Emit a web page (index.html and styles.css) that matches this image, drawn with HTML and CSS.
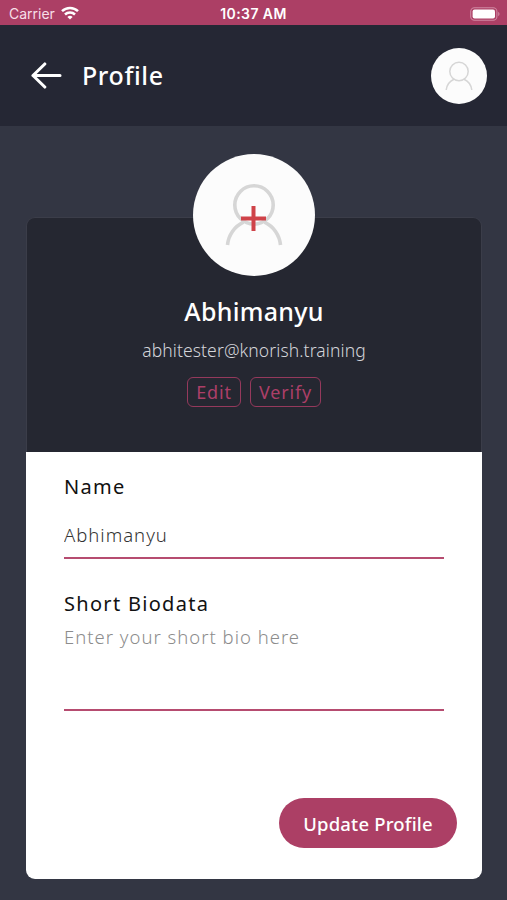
FILE: index.html
```html
<!DOCTYPE html>
<html lang="en">
<head>
    <meta charset="UTF-8">
    <meta name="viewport" content="width=device-width, initial-scale=1.0">
    <title>Profile</title>
    <link rel="stylesheet" href="styles.css">
</head>
<body>
    <div class="status-bar">
        <div class="carrier">
            <span>Carrier</span>
            <svg width="18" height="14" viewBox="0 0 18 14" fill="none" stroke="#fff" stroke-width="2.5">
                <path d="M1 5.2a11.5 11.5 0 0 1 16 0"/>
                <path d="M4 8.5a7.2 7.2 0 0 1 10 0"/>
                <path d="M9 13.6L6.4 11a3.7 3.7 0 0 1 5.2 0z" fill="#fff" stroke="none"/>
            </svg>
        </div>
        <div class="clock">10:37 AM</div>
        <svg class="battery" width="31" height="14" viewBox="0 0 31 14">
            <rect x="0.7" y="0.7" width="26.2" height="12.6" rx="3.8" fill="none" stroke="#d088a2" stroke-width="1.1"/>
            <rect x="2.6" y="2.600" width="22.4" height="8.8" rx="2" fill="#fff"/>
            <path d="M28.2 4.8v4.4c1.8-.7 1.8-3.7 0-4.400z" fill="#d088a2"/>
        </svg>
    </div>

    <header class="header">
        <svg class="back" width="32" height="28" viewBox="0 0 32 28" fill="none" stroke="#fff" stroke-width="3.1" stroke-linecap="round" stroke-linejoin="round">
            <path d="M30 13.500H3M14.800 2L3 13.500l11.800 11.500"/>
        </svg>
        <h1>Profile</h1>
        <div class="avatar-small">
            <svg width="28" height="30" viewBox="0 0 28 30" fill="none" stroke="#d6d6d6" stroke-width="1.5">
                <circle cx="14" cy="10.500" r="9.2"/>
                <path d="M1.200 29A13.500 13.500 0 0 1 9 18.300M26.800 29A13.500 13.500 0 0 0 19 18.300"/>
            </svg>
        </div>
    </header>

    <main class="card">
        <div class="card-top">
            <div class="avatar">
                <svg width="60" height="64" viewBox="0 0 60 64" fill="none" stroke="#d6d6d6" stroke-width="3.6">
                    <circle cx="30" cy="22" r="19.200"/>
                    <path d="M3.500 62A28 28 0 0 1 19.500 39.200M56.500 62A28 28 0 0 0 40.500 39.200"/>
                    <path d="M29.500 23v25M17 35.500h25" stroke="#cf4349" stroke-width="4"/>
                </svg>
            </div>
            <h2>Abhimanyu</h2>
            <p class="email">abhitester@knorish.training</p>
            <div class="actions">
                <button class="btn-outline edit">Edit</button>
                <button class="btn-outline verify">Verify</button>
            </div>
        </div>
        <form class="form">
            <label for="name">Name</label>
            <input type="text" id="name" value="Abhimanyu">
            <label for="bio">Short Biodata</label>
            <textarea id="bio" placeholder="Enter your short bio here"></textarea>
            <button type="button" class="btn-update">Update Profile</button>
        </form>
    </main>
</body>
</html>
```
FILE: styles.css
```css
* {
    box-sizing: border-box;
}
body {
    margin: 0;
    height: 900px;
    background: #333643;
    font-family: "Noto Sans", "Open Sans", sans-serif;
    color: #fff;
    overflow: hidden;
}
svg {
    display: block;
}
h1, h2, p {
    margin: 0;
}
.status-bar {
    display: grid;
    grid-template-columns: 1fr auto 1fr;
    align-items: center;
    height: 25px;
    padding: 2px 6px 0 9px;
    background: #ac3f65;
    font-family: Inter, sans-serif;
    font-size: 14px;
}
.carrier {
    display: flex;
    align-items: center;
    gap: 6px;
    color: #f7dfe8;
}
.carrier svg {
    margin-top: -2px;
}
.clock {
    padding-right: 3px;
    font-weight: 600;
    letter-spacing: 0.4px;
}
.battery {
    justify-self: end;
}
.header {
    display: flex;
    align-items: center;
    height: 101px;
    padding: 0 20px 0 30px;
    background: #252734;
}
.header h1 {
    margin: -1px 0 0 20px;
    font-size: 25px;
    font-weight: 500;
    letter-spacing: 0.6px;
}
.avatar-small {
    display: flex;
    align-items: center;
    justify-content: center;
    width: 56px;
    height: 56px;
    margin-left: auto;
    border-radius: 50%;
    background: #fcfcfc;
}
.card {
    width: 456px;
    height: 662px;
    margin: 91px 0 0 26px;
    border-radius: 9px;
    /* white starts below the dark top so it can't bleed at the corners */
    background: linear-gradient(transparent 235px, #fff 235px);
}
.card-top {
    display: flex;
    flex-direction: column;
    align-items: center;
    height: 235px;
    border: 1px solid #3b3d49;
    border-bottom: 0;
    border-radius: 9px 9px 0 0;
    background: #252731;
}
.avatar {
    display: flex;
    align-items: center;
    justify-content: center;
    width: 122px;
    height: 122px;
    margin-top: -64px;
    border-radius: 50%;
    background: #fcfcfc;
}
.card-top h2 {
    margin-top: 18px;
    font-size: 25px;
    font-weight: 500;
    line-height: 34px;
    letter-spacing: 0.3px;
}
.email {
    margin-top: 10px;
    font-size: 17.500px;
    font-weight: 300;
    line-height: 24px;
    letter-spacing: 0.1px;
    color: #d4d5da;
}
.actions {
    display: flex;
    gap: 9px;
    margin-top: 15px;
}
.btn-outline {
    height: 30px;
    padding: 0;
    border: 1px solid #95395c;
    border-radius: 6px;
    background: none;
    color: #ac3f68;
    font-family: inherit;
    font-size: 18px;
    letter-spacing: 0.8px;
}
.edit {
    width: 54px;
}
.verify {
    width: 71px;
}
.form {
    display: flex;
    flex-direction: column;
    padding: 21px 25px 0 38px;
}
.form label {
    color: #111;
    font-size: 20px;
    line-height: 27px;
    letter-spacing: 1.3px;
}
.form input,
.form textarea {
    width: 380px;
    padding: 0;
    border: 0;
    border-bottom: 2px solid #b64c70;
    outline: none;
    background: none;
    color: #333;
    font-family: inherit;
    font-size: 18.500px;
    font-weight: 300;
    letter-spacing: 1px;
}
.form input {
    height: 48px;
    margin: 11px 0 31px;
    padding-top: 1px;
}
.form textarea {
    height: 94px;
    line-height: 26px;
    padding-top: 7px;
    resize: none;
}
.form textarea::placeholder {
    color: #8c8c8c;
}
.btn-update {
    align-self: flex-end;
    width: 178px;
    height: 50px;
    margin-top: 87px;
    padding: 0;
    border: 0;
    border-radius: 25px;
    background: #ac3f65;
    color: #fff;
    font-family: inherit;
    font-size: 18.500px;
    font-weight: 500;
    letter-spacing: 0.2px;
}
```
